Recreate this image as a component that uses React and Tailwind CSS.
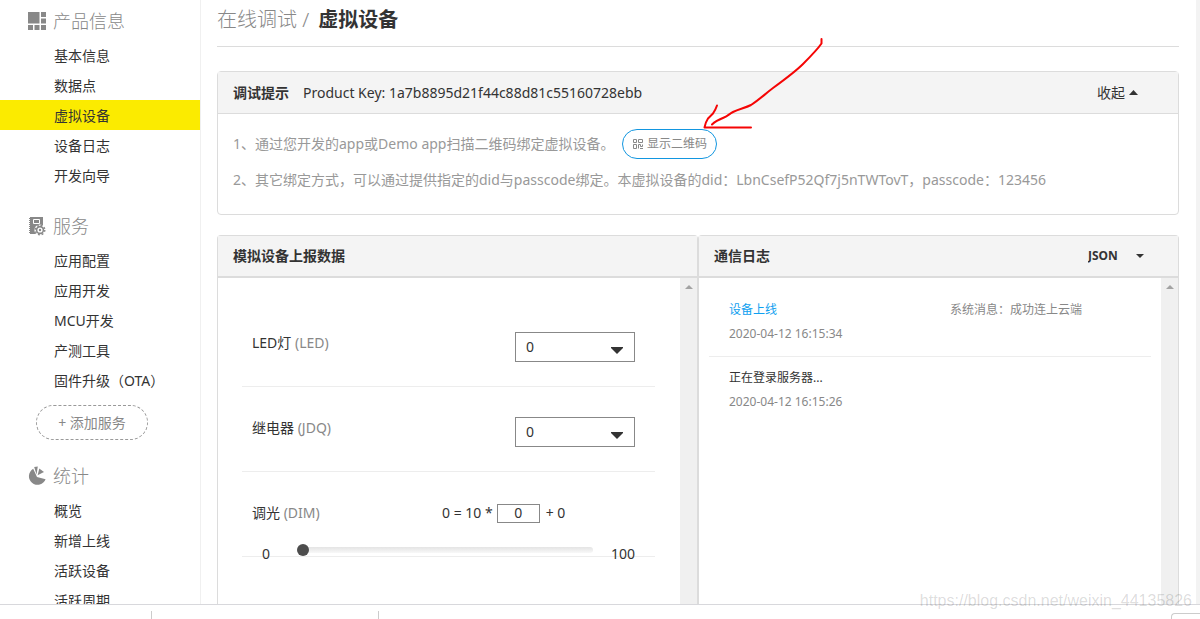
import { useState } from "react";

const sections = [
  {
    title: "产品信息",
    icon: ProductIcon,
    items: ["基本信息", "数据点", "虚拟设备", "设备日志", "开发向导"],
  },
  {
    title: "服务",
    icon: ServiceIcon,
    items: ["应用配置", "应用开发", "MCU开发", "产测工具", "固件升级（OTA）"],
    canAdd: true,
  },
  {
    title: "统计",
    icon: StatsIcon,
    items: ["概览", "新增上线", "活跃设备", "活跃周期"],
  },
];

const logs = [
  {
    id: 1,
    title: "设备上线",
    time: "2020-04-12 16:15:34",
    message: "系统消息：成功连上云端",
    online: true,
  },
  { id: 2, title: "正在登录服务器...", time: "2020-04-12 16:15:26" },
];

function ProductIcon() {
  return (
    <svg width="18" height="18" viewBox="0 0 18 18" fill="#888">
      <path d="M0 0h11.500v11.500H0zM13 0h5v5h-5zM13 6.500h5v5h-5zM0 13h5v5H0zM6.500 13h5v5h-5zM13 13h5v5h-5z" />
    </svg>
  );
}

function ServiceIcon() {
  return (
    <svg width="18" height="20" viewBox="0 0 18 20">
      <path
        d="M2 1h13v17H2zM1 2h2v1H1zM1 4h2v1H1zM1 6h2v1H1zM1 8h2v1H1zM1 10h2v1H1zM1 12h2v1H1zM1 14h2v1H1zM1 16h2v1H1z"
        fill="#888"
      />
      <path d="M5.500 3.500h6v4h-6z" fill="none" stroke="#fff" />
      <circle cx="12" cy="14" r="5.600" fill="#fff" />
      <circle cx="12" cy="14" r="3.400" fill="none" stroke="#888" strokeWidth="1.600" />
      <circle
        cx="12"
        cy="14"
        r="4.800"
        fill="none"
        stroke="#888"
        strokeWidth="1.400"
        strokeDasharray="1.900 1.870"
      />
      <circle cx="12" cy="14" r="1.200" fill="#888" />
    </svg>
  );
}

function StatsIcon() {
  return (
    <svg width="18" height="20" viewBox="0 0 18 20" fill="#888">
      <path d="M9 11 5.200 2.800A8.600 8.600 0 1 0 17.600 13.200Z" />
      <path d="M8.500 8.500 6.200 1 9.800.6Z" />
      <path d="M9.600 9.200 11.300 2.400 16 6Z" />
    </svg>
  );
}

function QrIcon() {
  return (
    <svg width="10" height="10" viewBox="0 0 10 10" fill="none" stroke="#888">
      <path d="M.5.5h3v3h-3zM5.500.5h4v3h-4zM.5 5.500h3v4h-3zM5.500 9.500v-4h2v2h2v-2M7 9.500h3" />
    </svg>
  );
}

function Sidebar() {
  const [active, setActive] = useState("虚拟设备");

  return (
    <nav className="w-[201px] shrink-0 overflow-hidden border-r border-[#f0f0f0]">
      {sections.map(({ title, icon: Icon, items, canAdd }) => (
        <section key={title} className="mb-[15px]">
          <h2 className="flex h-10 items-center gap-[7px] pl-7 pt-0.5 text-lg font-light text-[#888]">
            <Icon />
            {title}
          </h2>
          <ul>
            {items.map((item) => (
              <li key={item}>
                <a
                  href="#"
                  onClick={() => setActive(item)}
                  className={`block h-[30px] pl-[54px] text-sm leading-8 ${
                    active === item ? "bg-[#fbeb00]" : "hover:bg-gray-50"
                  }`}
                >
                  {item}
                </a>
              </li>
            ))}
          </ul>
          {canAdd && (
            <button className="ml-9 mt-2.5 block h-[35px] w-28 rounded-full border border-dashed border-[#999] text-sm text-[#888]">
              + 添加服务
            </button>
          )}
        </section>
      ))}
    </nav>
  );
}

function Hints() {
  const [open, setOpen] = useState(true);

  return (
    <section className="mt-6 rounded border border-[#dcdcdc]">
      <header className="flex h-[42px] items-center border-b border-[#dcdcdc] bg-[#f4f4f4] pl-[15px] pr-10 text-sm">
        <h2 className="mr-3.5 font-bold">调试提示</h2>
        <p>Product Key: 1a7b8895d21f44c88d81c55160728ebb</p>
        <button
          onClick={() => setOpen(!open)}
          className="ml-auto flex items-center gap-1"
        >
          收起
          <svg width="9" height="5" viewBox="0 0 9 5" fill="#333">
            <path d="M0 5 4.500 0 9 5Z" />
          </svg>
        </button>
      </header>
      {open && (
        <div className="px-[15px] pb-[19px] pt-[15px] text-sm leading-[30px] text-[#999]">
          <div className="flex items-center gap-2">
            <p>1、通过您开发的app或Demo app扫描二维码绑定虚拟设备。</p>
            <button className="flex h-[30px] w-[95px] items-center justify-center gap-1 rounded-full border border-[#1296e0] text-xs text-[#888]">
              <QrIcon />
              显示二维码
            </button>
          </div>
          <p className="mt-1.5">
            2、其它绑定方式，可以通过提供指定的did与passcode绑定。本虚拟设备的did：LbnCsefP52Qf7j5nTWTovT，passcode：123456
          </p>
        </div>
      )}
    </section>
  );
}

function ScrollTrack() {
  return (
    <div className="flex w-[17px] shrink-0 justify-center bg-[#f0f0f0] pt-[7px]">
      <svg width="8" height="4" viewBox="0 0 8 4" fill="#a3a3a3">
        <path d="M0 4 4 0l4 4Z" />
      </svg>
    </div>
  );
}

function SelectRow({ id, label, code }) {
  return (
    <div className="flex h-[85px] items-start justify-between border-b border-[#ededed] pl-2.5 pr-5 pt-[30px]">
      <label htmlFor={id} className="text-sm leading-[22px]">
        {label} <span className="text-[#888]">({code})</span>
      </label>
      <div className="relative">
        <select
          id={id}
          className="block h-[30px] w-[120px] appearance-none border border-[#888] bg-white pl-2.5 text-sm"
        >
          <option>0</option>
          <option>1</option>
        </select>
        <svg
          className="pointer-events-none absolute right-3 top-[15px]"
          width="12"
          height="7"
          viewBox="0 0 12 7"
          fill="#333"
        >
          <path d="M0 0h12v1L6 7 0 1Z" />
        </svg>
      </div>
    </div>
  );
}

function DimRow() {
  const [value, setValue] = useState(0);

  return (
    <div className="h-[85px] border-b border-[#ededed] pl-2.5 pr-5 pt-[30px] text-sm">
      <div className="flex h-[22px] items-center">
        <label htmlFor="dim" className="w-[190px]">
          调光 <span className="text-[#888]">(DIM)</span>
        </label>
        <span>0 = 10 *</span>
        <input
          id="dim"
          value={value}
          onChange={(e) => setValue(e.target.value)}
          className="ml-1 mr-1.5 h-[19px] w-[43px] border border-[#888] text-center"
        />
        <span>+ 0</span>
      </div>
      <div className="mt-5 flex items-center pl-2.5">
        <span className="w-[35px] leading-5">0</span>
        <input
          type="range"
          aria-label="调光"
          min="0"
          max="100"
          value={value}
          onChange={(e) => setValue(e.target.value)}
          className="mb-2 h-1.5 min-w-0 flex-1 appearance-none rounded-sm bg-linear-to-b from-[#e4e4e4] to-[#f8f8f8] [&::-webkit-slider-thumb]:size-3 [&::-webkit-slider-thumb]:appearance-none [&::-webkit-slider-thumb]:rounded-full [&::-webkit-slider-thumb]:bg-[#4d4d4d]"
        />
        <span className="w-[42px] text-right leading-5">100</span>
      </div>
    </div>
  );
}

function ReportPanel() {
  return (
    <section className="flex flex-1 flex-col rounded-t border border-b-0 border-[#dcdcdc]">
      <h2 className="h-[42px] border-b-2 border-[#dcdcdc] bg-[#f4f4f4] pl-[15px] text-sm font-bold leading-10">
        模拟设备上报数据
      </h2>
      <div className="flex flex-1">
        <div className="flex-1 pl-6 pr-[25px] pt-6">
          <SelectRow id="led" label="LED灯" code="LED" />
          <SelectRow id="jdq" label="继电器" code="JDQ" />
          <DimRow />
        </div>
        <ScrollTrack />
      </div>
    </section>
  );
}

function LogPanel() {
  return (
    <section className="flex flex-1 flex-col rounded-t border border-b-0 border-[#dcdcdc]">
      <header className="flex h-[42px] items-center justify-between border-b-2 border-[#dcdcdc] bg-[#f4f4f4] pl-[15px] pr-[34px] text-sm font-bold">
        <h2>通信日志</h2>
        <div className="relative">
          <select
            aria-label="日志格式"
            className="block w-14 appearance-none bg-transparent text-xs font-bold"
          >
            <option>JSON</option>
            <option>HEX</option>
          </select>
          <svg
            className="pointer-events-none absolute right-0 top-1.5"
            width="8"
            height="4"
            viewBox="0 0 8 4"
            fill="#333"
          >
            <path d="M0 0h8L4 4Z" />
          </svg>
        </div>
      </header>
      <div className="flex flex-1">
        <ul className="flex-1 px-2.5 pt-[11px] text-xs leading-6 text-[#888]">
          {logs.map((log) => (
            <li
              key={log.id}
              className="grid grid-cols-2 border-b border-[#ededed] px-5 pb-2.5 pt-[9px] last:border-0"
            >
              <div>
                <p className={log.online ? "text-[#0fa0f0]" : "text-[#333]"}>
                  {log.title}
                </p>
                <time>{log.time}</time>
              </div>
              <p className="pl-5">{log.message}</p>
            </li>
          ))}
        </ul>
        <ScrollTrack />
      </div>
    </section>
  );
}

function RedArrow() {
  return (
    <svg
      className="pointer-events-none absolute left-[499px] top-9"
      width="130"
      height="96"
      viewBox="0 0 130 96"
      fill="none"
      stroke="#f50505"
      strokeWidth="2"
      strokeLinecap="round"
      strokeLinejoin="round"
    >
      <path d="M121.500 3v4.500C117 14 109 22 103 28 95 36 84 44 73 52c-8 6-14 12-22 17-6 3-12 4-18 7-4 2-5 4-9 5.500-5 2-9 4-12 7" />
      <path d="M17 69.500c-1 3-2 5-4 8l-5 5c-2 3-3 6-3.500 9H51" />
    </svg>
  );
}

export default function App() {
  return (
    <div className="relative flex h-screen flex-col overflow-hidden bg-white font-['Noto_Sans','Noto_Sans_CJK_SC',sans-serif] text-[#333]">
      <div className="flex min-h-0 flex-1">
        <Sidebar />
        <main className="relative flex flex-1 flex-col pl-4 pr-[17px]">
          <h1 className="h-[47px] border-b border-[#dcdcdc] text-xl font-light leading-10 text-[#888]">
            在线调试 <span className="mr-1">/</span>{" "}
            <strong className="font-bold text-[#333]">虚拟设备</strong>
          </h1>
          <Hints />
          <div className="mt-5 flex flex-1">
            <ReportPanel />
            <LogPanel />
          </div>
          <RedArrow />
        </main>
        <div className="w-1 bg-[#f3f3f3]" />
      </div>

      <footer className="flex h-[15px] shrink-0 border-t border-[#d8d8dc] pt-1.5">
        <div className="w-[152px] border-r border-[#ccc]" />
        <div className="w-[227px] border-r border-[#ccc]" />
        <div className="ml-auto mt-0.5 w-[29px] rounded-tl border-l border-t border-[#ccc]" />
      </footer>

      <p className="absolute bottom-1.5 right-2 font-['Liberation_Sans',sans-serif] text-base text-black/15">
        https://blog.csdn.net/weixin_44135826
      </p>
    </div>
  );
}
